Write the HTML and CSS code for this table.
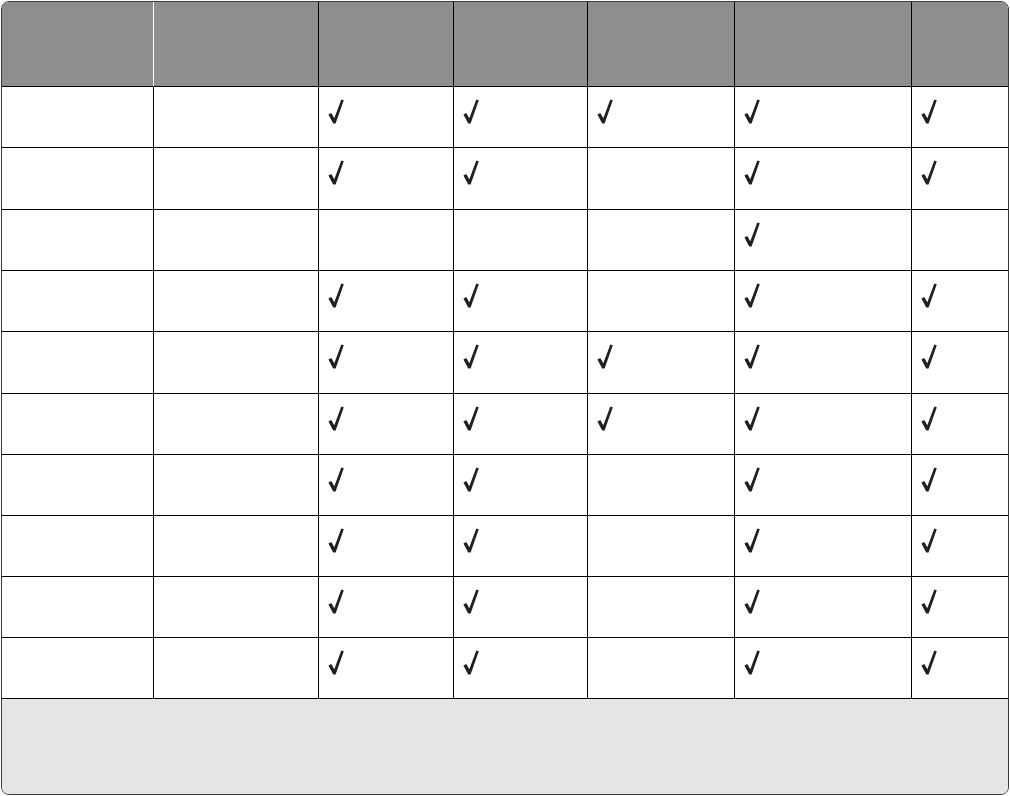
FILE: index.html
```html
<!DOCTYPE html>
<html lang="en">
<head>
<meta charset="utf-8">
<title>Feature table</title>
<link rel="stylesheet" href="styles.css">
</head>
<body>
<svg width="0" height="0" class="defs" aria-hidden="true">
  <defs>
    <symbol id="chk" viewBox="0 0 16 25">
      <path d="M0.4 15.6 L3.3 13.9 L6.3 19.2 L13.3 0.4 L15.8 1.3 L7.6 24.6 L5.2 24.6 Z"/>
    </symbol>
  </defs>
</svg>
<div class="frame">
  <div class="row head">
    <div class="cell c1 light"></div><div class="cell"></div><div class="cell"></div><div class="cell"></div><div class="cell"></div><div class="cell"></div><div class="cell"></div>
  </div>
  <div class="row">
    <div class="cell"></div><div class="cell"></div>
    <div class="cell"><svg class="ck"><use href="#chk"/></svg></div>
    <div class="cell"><svg class="ck"><use href="#chk"/></svg></div>
    <div class="cell"><svg class="ck"><use href="#chk"/></svg></div>
    <div class="cell"><svg class="ck"><use href="#chk"/></svg></div>
    <div class="cell"><svg class="ck"><use href="#chk"/></svg></div>
  </div>
  <div class="row tall">
    <div class="cell"></div><div class="cell"></div>
    <div class="cell"><svg class="ck"><use href="#chk"/></svg></div>
    <div class="cell"><svg class="ck"><use href="#chk"/></svg></div>
    <div class="cell"></div>
    <div class="cell"><svg class="ck"><use href="#chk"/></svg></div>
    <div class="cell"><svg class="ck"><use href="#chk"/></svg></div>
  </div>
  <div class="row">
    <div class="cell"></div><div class="cell"></div>
    <div class="cell"></div>
    <div class="cell"></div>
    <div class="cell"></div>
    <div class="cell"><svg class="ck"><use href="#chk"/></svg></div>
    <div class="cell"></div>
  </div>
  <div class="row">
    <div class="cell"></div><div class="cell"></div>
    <div class="cell"><svg class="ck"><use href="#chk"/></svg></div>
    <div class="cell"><svg class="ck"><use href="#chk"/></svg></div>
    <div class="cell"></div>
    <div class="cell"><svg class="ck"><use href="#chk"/></svg></div>
    <div class="cell"><svg class="ck"><use href="#chk"/></svg></div>
  </div>
  <div class="row tall">
    <div class="cell"></div><div class="cell"></div>
    <div class="cell"><svg class="ck"><use href="#chk"/></svg></div>
    <div class="cell"><svg class="ck"><use href="#chk"/></svg></div>
    <div class="cell"><svg class="ck"><use href="#chk"/></svg></div>
    <div class="cell"><svg class="ck"><use href="#chk"/></svg></div>
    <div class="cell"><svg class="ck"><use href="#chk"/></svg></div>
  </div>
  <div class="row">
    <div class="cell"></div><div class="cell"></div>
    <div class="cell"><svg class="ck"><use href="#chk"/></svg></div>
    <div class="cell"><svg class="ck"><use href="#chk"/></svg></div>
    <div class="cell"><svg class="ck"><use href="#chk"/></svg></div>
    <div class="cell"><svg class="ck"><use href="#chk"/></svg></div>
    <div class="cell"><svg class="ck"><use href="#chk"/></svg></div>
  </div>
  <div class="row">
    <div class="cell"></div><div class="cell"></div>
    <div class="cell"><svg class="ck"><use href="#chk"/></svg></div>
    <div class="cell"><svg class="ck"><use href="#chk"/></svg></div>
    <div class="cell"></div>
    <div class="cell"><svg class="ck"><use href="#chk"/></svg></div>
    <div class="cell"><svg class="ck"><use href="#chk"/></svg></div>
  </div>
  <div class="row">
    <div class="cell"></div><div class="cell"></div>
    <div class="cell"><svg class="ck"><use href="#chk"/></svg></div>
    <div class="cell"><svg class="ck"><use href="#chk"/></svg></div>
    <div class="cell"></div>
    <div class="cell"><svg class="ck"><use href="#chk"/></svg></div>
    <div class="cell"><svg class="ck"><use href="#chk"/></svg></div>
  </div>
  <div class="row">
    <div class="cell"></div><div class="cell"></div>
    <div class="cell"><svg class="ck"><use href="#chk"/></svg></div>
    <div class="cell"><svg class="ck"><use href="#chk"/></svg></div>
    <div class="cell"></div>
    <div class="cell"><svg class="ck"><use href="#chk"/></svg></div>
    <div class="cell"><svg class="ck"><use href="#chk"/></svg></div>
  </div>
  <div class="row">
    <div class="cell"></div><div class="cell"></div>
    <div class="cell"><svg class="ck"><use href="#chk"/></svg></div>
    <div class="cell"><svg class="ck"><use href="#chk"/></svg></div>
    <div class="cell"></div>
    <div class="cell"><svg class="ck"><use href="#chk"/></svg></div>
    <div class="cell"><svg class="ck"><use href="#chk"/></svg></div>
  </div>
  <div class="foot"></div>
</div>
</body>
</html>
```
FILE: styles.css
```css
* { box-sizing: border-box; }
html, body { margin: 0; padding: 0; background: #ffffff; }
body { font-family: "Liberation Sans", Arial, sans-serif; }
.defs { position: absolute; width: 0; height: 0; overflow: hidden; }

.frame {
  margin: 1px 0 0 1px;
  width: 1008px;
  height: 794px;
  border: 1px solid #3a3a3a;
  border-radius: 8px;
  overflow: hidden;
  display: flex;
  flex-direction: column;
}

.row {
  display: grid;
  grid-template-columns: 152px 165px 135px 134px 147px 177px 96px;
  height: 61px;
  flex: none;
}
.row.tall { height: 62px; }
.row.head { height: 85px; background: #8e8e8e; }

.cell {
  border-right: 1px solid #000;
  border-bottom: 1px solid #000;
  padding: 12px 0 0 9px;
}
.cell:last-child { border-right: none; }
.head .cell.light { border-right-color: #ffffff; }

.ck {
  display: block;
  width: 16px;
  height: 25px;
  fill: #231f20;
}

.foot {
  flex: 1;
  background: #e5e5e5;
}
```
